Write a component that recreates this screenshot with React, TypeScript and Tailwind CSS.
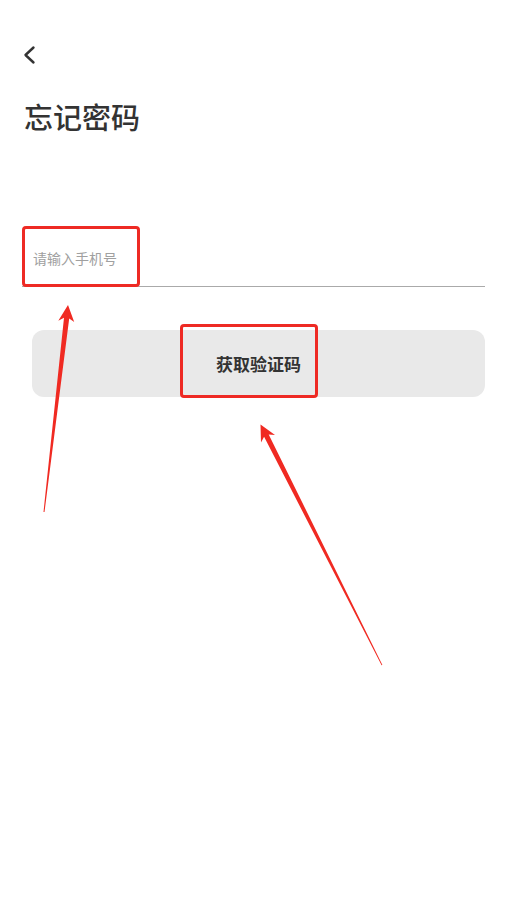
import React from "react";

export default function App() {
  return (
    <div className="relative w-full h-[921px] bg-white font-['Noto_Sans_CJK_SC','Noto_Sans',sans-serif] text-[#333]">
      <div className="pt-[45px] pl-[22px]">
        <svg width="14" height="20" viewBox="0 0 14 20" fill="none">
          <path d="M11.5 2.5 L3.5 10 L11.5 17.5" stroke="#333" strokeWidth="2.4" strokeLinecap="round" strokeLinejoin="round" />
        </svg>
      </div>
      <h1 className="mt-[37px] pl-[24px] text-[29px] leading-[29px] font-medium text-[#333]">忘记密码</h1>
      <div className="mt-[95px] pl-[22px] pr-[31px]">
        <div className="h-[61px] border-b border-[#aaaaaa] pt-[19px] pl-[11px]">
          <input
            className="w-full bg-transparent outline-none text-[14px] leading-[14px] placeholder:text-[#a0a0a0]"
            placeholder="请输入手机号"
          />
        </div>
      </div>
      <div className="mt-[43px] pl-[32px] pr-[31px]">
        <button className="w-full h-[67px] rounded-[12px] bg-[#e9e9e9] text-[17px] font-bold text-[#333] flex items-center justify-center">
          获取验证码
        </button>
      </div>
      <svg className="absolute inset-0 pointer-events-none" width="516" height="921" viewBox="0 0 516 921">
        <rect x="23.5" y="227.5" width="115" height="58" rx="2.5" fill="none" stroke="#ee2a24" strokeWidth="3" />
        <rect x="181.5" y="325.5" width="135" height="71" rx="2.5" fill="none" stroke="#ee2a24" strokeWidth="3" />
        <polygon
          fill="#f02a22"
          points="68,305 74.2,322 69.2,318.4 44.5,512 43.5,512 64,317.8 58.3,320.7"
        />
        <polygon
          fill="#f02a22"
          points="260.5,424.5 275,435 268.7,434.4 382.4,665 381.6,665.2 264.1,436.8 261,442.5"
        />
      </svg>
    </div>
  );
}
